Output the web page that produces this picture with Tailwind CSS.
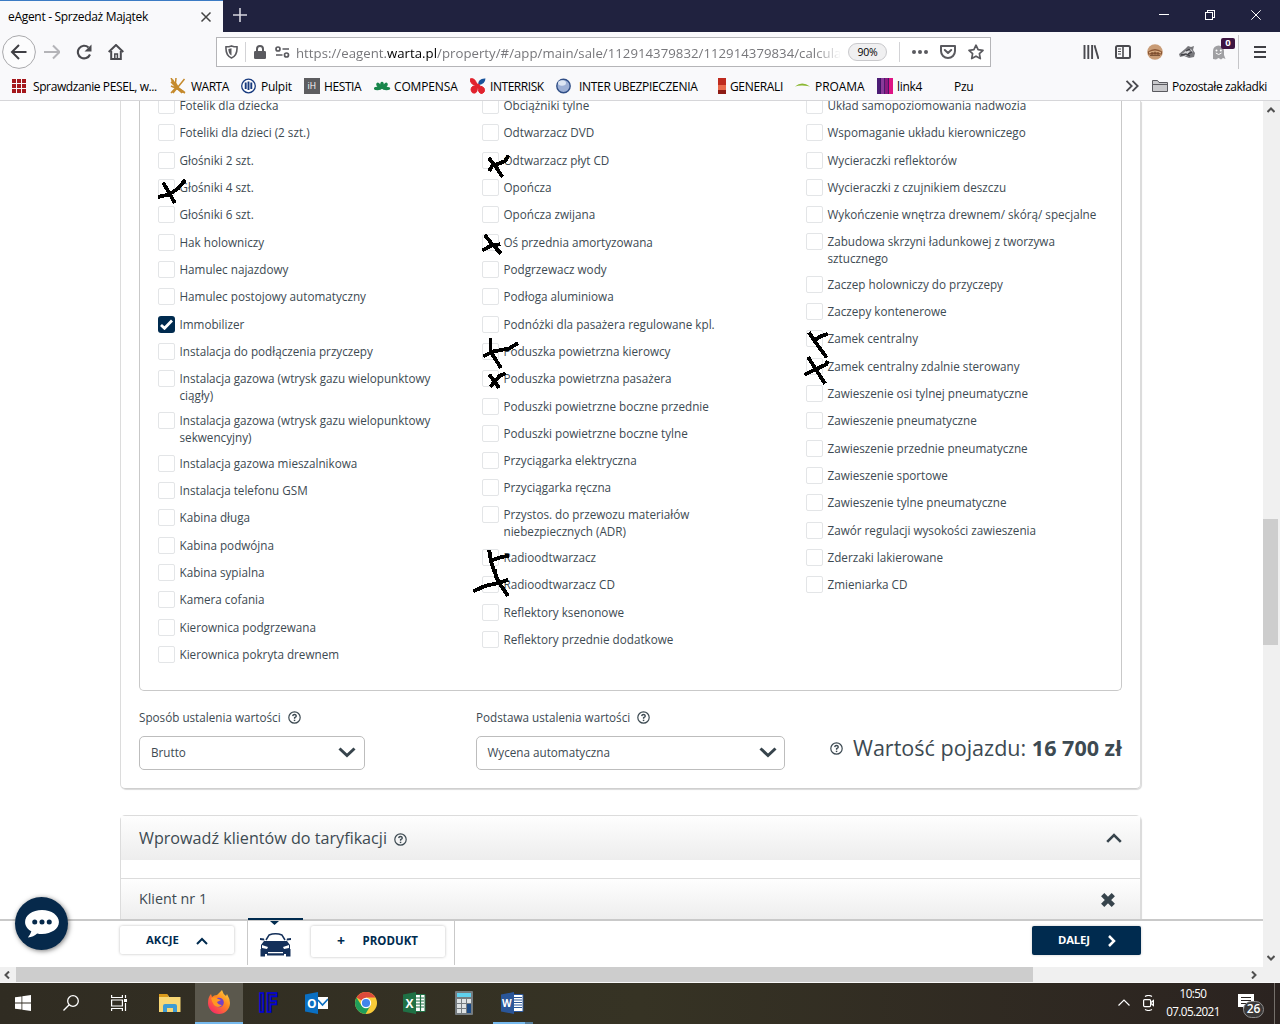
<!DOCTYPE html>
<html lang="pl">
<head>
<meta charset="utf-8">
<title>eAgent - Sprzedaż Majątek</title>
<script src="https://cdn.jsdelivr.net/npm/@tailwindcss/browser@4"></script>
</head>
<body class="bg-white">
<div class="relative flex h-[1024px] w-[1280px] flex-col overflow-hidden font-['Open_Sans',sans-serif] text-[#3d4a52]">

  <!-- Tab strip -->
  <div class="flex h-8 shrink-0 bg-[#20223f] text-black">
    <div class="flex w-[223px] items-center border-t border-[#3b7bc4] bg-[#f9f9fb] pl-2">
      <span class="w-[192px] text-[12px] tracking-[-0.310px] whitespace-nowrap">eAgent - Sprzedaż Majątek</span>
      <svg class="size-3" viewBox="0 0 12 12" fill="none" stroke="#444" stroke-width="1.5"><path d="M1.5 1.5l9 9M10.500 1.500l-9 9"/></svg>
    </div>
    <svg class="mt-2 ml-2.5 size-4" viewBox="0 0 16 16" stroke="#d5d5de" stroke-width="1.6"><path d="M0 7h14M7 0v14"/></svg>
    <div class="ml-auto flex items-center gap-[36px] pr-[19px] pb-0.5">
      <svg class="h-2.5 w-2.5" viewBox="0 0 10 10" stroke="#fff" shape-rendering="crispEdges"><path d="M0 4.500h10"/></svg>
      <svg class="h-2.5 w-2.5" viewBox="0 0 10 10" stroke="#fff" fill="none" shape-rendering="crispEdges"><path d="M.5 2.500h7v7h-7zM2.500 2.500v-2h7v7h-2"/></svg>
      <svg class="h-2.5 w-2.5" viewBox="0 0 10 10" stroke="#fff"><path d="M.3.3l9.400 9.400M9.700.3L.3 9.700"/></svg>
    </div>
  </div>

  <!-- Navigation toolbar -->
  <div class="flex h-10 shrink-0 items-center bg-[#f9f9fb] pl-0.5">
    <svg class="size-[34px]" viewBox="0 0 34 34" fill="none"><circle cx="17" cy="17" r="16.400" fill="#fcfcfd" stroke="#a9a9ac"/><path d="M24.500 17H10.500M17 10l-7 7 7 7" stroke="#3f3f44" stroke-width="2"/></svg>
    <svg class="ml-2 size-4" viewBox="0 0 16 16" fill="none" stroke="#b4b4b8" stroke-width="2"><path d="M0 8h15M9 1.500L15.500 8 9 14.500"/></svg>
    <svg class="ml-4 size-4" viewBox="0 0 16 16" fill="none"><path d="M14 10.500A6.300 6.300 0 1 1 12.500 3.500" stroke="#4a4a4f" stroke-width="2.100"/><path d="M15.500.5v7h-7z" fill="#4a4a4f"/></svg>
    <svg class="ml-4 size-4" viewBox="0 0 16 16" fill="none" stroke="#4a4a4f"><path d="M.7 8L8 1l7.300 7" stroke-width="2"/><path d="M3.200 7v8h9.600V7" stroke-width="2"/><path d="M6.800 15v-5h2.600v5" stroke-width="1.500"/></svg>

    <div class="ml-[92px] flex h-[30px] w-[775px] items-center border border-[#b5b5b8] bg-white pl-2">
      <svg class="h-[14px] w-[13px]" viewBox="0 0 13 14" fill="none"><path d="M1 1.800Q4 1.800 6.500.9 9 1.800 12 1.800 12.600 10.500 6.500 13 .4 10.500 1 1.800z" stroke="#5a5a5f" stroke-width="1.600"/><path d="M6.500 3.300v7.200Q3.300 8.500 3.400 3.900z" fill="#5a5a5f"/></svg>
      <div class="ml-[7px] h-5 w-px bg-[#d3d3d6]"></div>
      <svg class="ml-2 h-[14px] w-3" viewBox="0 0 12 14"><path d="M3 7V4a3 3 0 0 1 6 0v3" fill="none" stroke="#5a5a5f" stroke-width="2"/><rect y="6" width="12" height="8" rx="1.300" fill="#5a5a5f"/></svg>
      <svg class="ml-[9px] h-3 w-[15px]" viewBox="0 0 15 12" fill="none" stroke="#5a5a5f" stroke-width="1.700"><circle cx="3" cy="3" r="2"/><path d="M7.500 3H14M1 9h6.500"/><circle cx="11.500" cy="9" r="2"/></svg>
      <div class="mt-[3px] ml-[6px] w-[545px] text-[13.200px] tracking-[0.030px] whitespace-nowrap text-[#77777b] [mask-image:linear-gradient(to_right,black_95%,transparent)]">https://eagent.<span class="text-black">warta.pl</span>/property/#/app/main/sale/112914379832/112914379834/calcula</div>
      <div class="ml-[7px] flex h-[18px] w-[39px] items-center justify-center rounded-full border border-[#c9c9cc] bg-[#f0f0f1] pt-0.5 text-[10.500px] tracking-[-0.300px] text-black">90%</div>
      <div class="ml-3 h-5 w-px bg-[#d3d3d6]"></div>
      <svg class="ml-3 h-1 w-4" viewBox="0 0 16 4" fill="#5a5a5f"><circle cx="2" cy="2" r="2"/><circle cx="8" cy="2" r="2"/><circle cx="14" cy="2" r="2"/></svg>
      <svg class="ml-3 h-[14px] w-4" viewBox="0 0 16 14" fill="none" stroke="#5a5a5f" stroke-width="2" stroke-linecap="round" stroke-linejoin="round"><path d="M1 1h14v5a7 7 0 0 1-14 0z"/><path d="M4.800 5L8 8l3.200-3"/></svg>
      <svg class="ml-3 size-4" viewBox="0 0 16 16" fill="none" stroke="#5a5a5f" stroke-width="1.700" stroke-linejoin="round"><path d="M8 1.200l2.100 4.500 4.900.6-3.600 3.400.9 4.900L8 12.200l-4.300 2.400.9-4.900L1 6.300l4.900-.6z"/></svg>
    </div>

    <svg class="ml-[92px] h-[14px] w-4" viewBox="0 0 16 14" stroke="#4a4a4f" stroke-width="1.900"><path d="M1.500 0v14M5.300 0v14M9.100 0v14M11.500 .3L15.500 14"/></svg>
    <svg class="ml-4 h-[14px] w-4" viewBox="0 0 16 14" fill="none" stroke="#4a4a4f"><rect x="1" y="1" width="14" height="12" rx="1.500" stroke-width="2"/><path d="M8 1v12" stroke-width="1.600"/><path d="M3 4h3M3 6.500h3M3 9h3"/></svg>
    <svg class="ml-4 size-4" viewBox="0 0 16 16"><circle cx="8" cy="8" r="7.800" fill="#c99c76"/><path d="M1 7.500Q8 2.500 15 7.500v3H1z" fill="#8b5735"/><path d="M2 8Q8 5 14 8v1.500Q8 7 2 9.500z" fill="#d8aa80"/><path d="M3 11.500h10M5 8v3M8 7.500v3M11 8v3" stroke="#6c4227" stroke-width=".8"/></svg>
    <svg class="ml-4 h-[14px] w-4" viewBox="0 0 16 14"><path d="M0 9L6 4l3-3 3 1 3-1-1 4 2 3-1 4-5 1-5-2-4 1z" fill="#77777b"/><path d="M3 9l5-4 3 1-4 5zM10 3l3 2 1 3" fill="#d5d5d8"/><path d="M2 10l5-1 4 2M7 6l4-2M9 9l4-2" stroke="#3f3f44" stroke-width="1.300" fill="none"/></svg>
    <div class="relative ml-4 h-4 w-4">
      <svg class="size-4" viewBox="0 0 16 16"><path d="M2 15V7a5.500 5.500 0 0 1 11 0v4l1.500 4-2.500-1-2 1.500-2.500-1.500L5 15.500z" fill="#a0a0a3"/><circle cx="5.500" cy="6.500" r="1" fill="#fff"/><circle cx="9.800" cy="6.500" r="1" fill="#fff"/><path d="M4.800 9Q7.700 12 10.500 9" stroke="#fff" fill="none"/></svg>
      <div class="absolute -top-[6px] left-2.5 flex h-[11px] w-[14px] items-center justify-center rounded-[2px] bg-[#3d1542] text-[9.500px] font-bold text-white">0</div>
    </div>
    <div class="ml-[11px] h-[34px] w-px bg-[#c6c6c9]"></div>
    <svg class="ml-[15px] h-3 w-3" viewBox="0 0 12 12" stroke="#3f3f44" stroke-width="2"><path d="M0 1h12M0 6h12M0 11h12"/></svg>
  </div>

  <!-- Bookmarks -->
  <div class="flex h-[29px] shrink-0 items-center border-b border-[#d6d6d9] bg-[#f9f9fb] pl-3 text-[12px] whitespace-nowrap text-black [&>span]:mt-0.5">
    <svg class="h-[14px] w-[21px]" viewBox="0 0 21 14" fill="#a5181c"><path d="M0 0h4v4H0zM5 0h4v4H5zM10 0h4v4h-4zM0 5h4v4H0zM5 5h4v4H5zM10 5h4v4h-4zM0 10h4v4H0zM5 10h4v4H5zM10 10h4v4h-4z"/></svg>
    <span class="w-[137px] tracking-[-0.400px]">Sprawdzanie PESEL, w...</span>
    <svg class="h-4 w-[21px]" viewBox="0 0 21 16" fill="none" stroke="#c58a2c" stroke-width="1.500"><path d="M1 0l5 8 9 6.500M1 4l6 6 5 5M6 0l-.5 5 3 5M1 15l5-5.500M14.500 1L8 9M1 8l7 3 7 4M3 15l4-5" /><path d="M2 2l5 8 6 4" stroke-width="2.500"/></svg>
    <span class="w-[50px] tracking-[-0.500px]">WARTA</span>
    <svg class="h-4 w-[20px]" viewBox="0 0 20 16"><circle cx="7.500" cy="8" r="6.800" fill="#fff" stroke="#16397e" stroke-width="1.300"/><path d="M4.700 4.500V11M7.500 3.500V12M10.300 4.500V11" stroke="#16397e" stroke-width="1.900"/></svg>
    <span class="w-[43px] tracking-[-0.250px]">Pulpit</span>
    <svg class="h-4 w-[20px]" viewBox="0 0 20 16"><path d="M0 0h16v16H0z" fill="#5d5d60"/><text x="3.500" y="11" font-size="8.500" fill="#fff" font-family="Open Sans">iH</text></svg>
    <span class="w-[50px] tracking-[-0.400px]">HESTIA</span>
    <svg class="h-4 w-[20px]" viewBox="0 0 20 16" fill="#18864b"><ellipse cx="8" cy="7.500" rx="2" ry="3.800"/><ellipse cx="5" cy="8" rx="1.900" ry="3.800" transform="rotate(-35 5 8)"/><ellipse cx="11" cy="8" rx="1.900" ry="3.800" transform="rotate(35 11 8)"/><ellipse cx="3.500" cy="10.500" rx="3.700" ry="1.700"/><ellipse cx="12.500" cy="10.500" rx="3.700" ry="1.700"/></svg>
    <span class="w-[76px] tracking-[-0.150px]">COMPENSA</span>
    <svg class="h-4 w-[20px]" viewBox="0 0 20 16"><path d="M0 1q5-2 7 6Q1 8 0 1zM7 8Q1 7 1 12q1 4 4 3 3-1 2-7zM8 8q0 8 4 7.500 3-1 2.500-4Q14 8 8 8z" fill="#e1232e" stroke="#e1232e"/><path d="M8 7Q8 0 15.500.5 15 7 8 7z" fill="#18539b"/><circle cx="7.500" cy="8" r="2.500" fill="#e1232e"/></svg>
    <span class="w-[66px] tracking-[-0.450px]">INTERRISK</span>
    <svg class="h-4 w-[23px]" viewBox="0 0 23 16"><circle cx="7.500" cy="8" r="6.700" fill="#9db0d6" stroke="#304e86" stroke-width="1.400"/><ellipse cx="6" cy="5" rx="4" ry="2.800" fill="#dce5f3"/></svg>
    <span class="w-[138px] tracking-[-0.320px]">INTER UBEZPIECZENIA</span>
    <svg class="h-4 w-[13px]" viewBox="0 0 13 16"><path d="M1 0h8v16H1z" fill="#bf2a1e"/><path d="M1 7h8v5H1z" fill="#ea6a4b"/><path d="M1 12h8v4H1z" fill="#8e1b14"/></svg>
    <span class="w-[65px] tracking-[-0.350px]">GENERALI</span>
    <svg class="h-4 w-[20px]" viewBox="0 0 20 16"><path d="M0 8.500Q7 2.500 15 8.500q-6-1-8-1-4 0-7 1z" fill="#8bb833"/></svg>
    <span class="w-[62px] tracking-[-0.050px]">PROAMA</span>
    <svg class="h-4 w-5" viewBox="0 0 20 16"><path d="M0 0h4v16H0z" fill="#4c1d75"/><path d="M4 0h4v16H4z" fill="#8a3a9a"/><path d="M8 0h4v16H8z" fill="#8c1a80"/><path d="M12 0h4v16h-4z" fill="#de1384"/><path d="M3.500 0v16M7.500 0v16M11.500 0v16" stroke="#3a1260" stroke-width=".8"/></svg>
    <span class="w-[57px] tracking-[-0.300px]">link4</span>
    <span class="w-[171px] tracking-[-0.300px]">Pzu</span>
    <svg class="h-3 w-[27px]" viewBox="0 0 27 12" fill="none" stroke="#4a4a4f" stroke-width="1.800"><path d="M1.500.8L6.700 6 1.500 11.200M7.500.8L12.700 6 7.500 11.200"/></svg>
    <svg class="h-4 w-5" viewBox="0 0 20 16"><path d="M.5 13.500V2.500h5l1.500 2h8.500v9z" fill="#c9c9cc" stroke="#5a5a5f"/><path d="M1 6.500h14" stroke="#5a5a5f"/></svg>
    <span class="tracking-[-0.380px]">Pozostałe zakładki</span>
  </div>

  <!-- Viewport -->
  <div class="flex h-[866px] shrink-0">
    <div class="flex w-[1263px] flex-col bg-white">
      <main class="flex h-[818px] flex-col overflow-hidden pl-[120px]">
        <section class="h-[688px] w-[1021px] shrink-0 rounded-b-[5px] border border-t-0 border-[#dcdcdc] border-b-[#cfcfcf] px-[18px] shadow-[1px_1px_1px_#d9d9d9]">
          <div id="equipment" class="flex h-[590px] w-[983px] rounded-b-[5px] border border-t-0 border-[#c9c9c9] pl-[18px]"></div>
          <div class="flex pt-[17px] text-[11.700px] leading-[18px]">
            <div class="w-[337px] shrink-0">
              <div class="flex items-center gap-[7px]"><span class="whitespace-nowrap">Sposób ustalenia wartości</span><svg class="size-[13px]"><use href="#help"/></svg></div>
              <div class="mt-[10px] flex h-[34px] w-[226px] items-center justify-between rounded-[5px] border border-[#bdbdbd] pr-2 pb-0.5 pl-[11px]"><span>Brutto</span><svg class="h-[11px] w-[18px]" viewBox="0 0 18 11" fill="none" stroke="#37444c" stroke-width="3"><path d="M1.500 1.500L9 8.500l7.500-7"/></svg></div>
            </div>
            <div class="w-[309px] shrink-0">
              <div class="flex items-center gap-[7px]"><span class="whitespace-nowrap">Podstawa ustalenia wartości</span><svg class="size-[13px]"><use href="#help"/></svg></div>
              <div class="mt-[10px] flex h-[34px] items-center justify-between rounded-[5px] border border-[#bdbdbd] pr-[7px] pb-0.5 pl-[10.500px]"><span>Wycena automatyczna</span><svg class="h-[11px] w-[18px]" viewBox="0 0 18 11" fill="none" stroke="#37444c" stroke-width="3"><path d="M1.500 1.500L9 8.500l7.500-7"/></svg></div>
            </div>
            <div class="ml-[45px] flex w-[292px] shrink-0 items-center gap-2.5 pt-[18px] text-[21.550px] whitespace-nowrap"><svg class="size-[13px] shrink-0"><use href="#help"/></svg><span>Wartość pojazdu: <b>16 700 zł</b></span></div>
          </div>
        </section>

        <section class="mt-[26px] h-[140px] w-[1021px] shrink-0 rounded-t-[5px] border border-[#dcdcdc] shadow-[1px_1px_1px_#d9d9d9]">
          <div class="flex h-[44px] items-center bg-linear-to-b from-[#fefefe] to-[#ededed] px-[18px]">
            <span class="text-[16.150px]">Wprowadź klientów do taryfikacji</span>
            <svg class="mt-[3px] ml-[7px] size-[13px]"><use href="#help"/></svg>
            <svg class="ml-auto h-2.5 w-4" viewBox="0 0 16 10" fill="none" stroke="#37444c" stroke-width="2.600"><path d="M1.200 8.800L8 2l6.800 6.800"/></svg>
          </div>
          <div class="mt-[18px] flex h-[43px] items-center justify-between border-t border-[#dcdcdc] bg-linear-to-b from-[#fefefe] to-[#ededed] pr-[25px] pb-0.5 pl-[18px]">
            <span class="text-[14.300px]">Klient nr 1</span>
            <svg class="mt-px size-[14px]" viewBox="0 0 14 14" stroke="#37444c" stroke-width="4.600"><path d="M1.700 1.700l10.600 10.600M12.300 1.700L1.700 12.300"/></svg>
          </div>
        </section>
      </main>

      <!-- Action bar -->
      <div class="relative flex h-12 border-t-2 border-[#c9c9c9] bg-white pl-[120px] text-[11.300px] font-bold text-[#002b4f]">
        <div class="absolute -top-[24px] left-[15px] flex size-[53px] items-center justify-center rounded-full bg-[#06294b] shadow-[1px_1px_5px_#0008]">
          <svg class="h-[30px] w-9" viewBox="0 0 36 31"><path d="M18 1C8 1 .5 6.500.5 13.500c0 4 2.500 7.500 6.500 9.500-1 3-2.500 5-3.500 6.500 4-.5 7-2 9.500-4.300 1.600.4 3.300.6 5 .6 10 0 17.500-5.500 17.500-12.300S28 1 18 1z" fill="#fff"/><g fill="#06294b"><circle cx="10.500" cy="13.500" r="2.600"/><circle cx="18" cy="13.500" r="2.600"/><circle cx="25.500" cy="13.500" r="2.600"/></g></svg>
        </div>
        <div class="mt-[5px] flex h-[28px] w-[114px] items-center rounded-[2px] pl-[26px] tracking-[0.050px] shadow-[0_0_3px_#0004]"><span class="w-[50px]">AKCJE</span><svg class="mt-0.5 h-2 w-3" viewBox="0 0 12 8" fill="none" stroke="#002b4f" stroke-width="2"><path d="M1 7l5-5 5 5"/></svg></div>
        <div class="relative ml-[13px] flex h-[44px] w-[208px] border-x border-[#c9c9c9]">
          <div class="absolute -top-[3px] left-0 h-[2px] w-[55px] bg-[#002b4f]"></div>
          <svg class="absolute top-0 left-[22px] h-[4px] w-[9px]" viewBox="0 0 9 4"><path d="M0 0h9L4.500 4z" fill="#002b4f"/></svg>
          <svg class="mt-3 ml-[11px] h-6 w-[33px]" viewBox="0 0 33 24"><path d="M7 7L10 2Q16.500-.5 23 2l3 5" fill="none" stroke="#14305a" stroke-width="1.500"/><path d="M5 8h23l3 4v6H2v-6zM1 5l4 .5.500 2L1 7zM32 5l-4 .5-.5 2L32 7zM1.500 16h30v7.500H27V21H6v2.500H1.500z" fill="#14305a"/><path d="M3 12l6 2-1 2-5-1zM30 12l-6 2 1 2 5-1zM9 19h15v1.200H9z" fill="#fff"/><path d="M8 21h17v1.500H8z" fill="#14305a"/></svg>
          <div class="mt-[5px] ml-[19px] flex h-[31px] w-[134px] items-center rounded-[2px] pb-0.5 pl-[26px] shadow-[0_0_3px_#0004]"><span class="w-[25.500px] text-[14px]">+</span><span class="text-[11.500px]">PRODUKT</span></div>
        </div>
        <div class="mt-[5px] mr-[122px] ml-auto flex h-[29px] w-[109px] items-center rounded-[2px] bg-[#002b4f] pb-px pl-[26px] tracking-[-0.150px] text-white shadow-[0_0_3px_#0003]"><span class="w-[49.500px]">DALEJ</span><svg class="mt-0.5 h-3 w-2" viewBox="0 0 8 12" fill="none" stroke="#fff" stroke-width="2.500"><path d="M1 1l5 5-5 5"/></svg></div>
      </div>
    </div>
    <div class="flex w-[17px] flex-col items-center bg-[#f0f0f0]">
      <svg class="mt-[5px] -ml-0.5 h-2 w-2" viewBox="0 0 8 8" fill="none" stroke="#505050" stroke-width="2"><path d="M.5 6L4 2.500 7.500 6"/></svg>
      <div class="mt-[405px] h-[126px] w-[15px] self-start bg-[#cdcdcd]"></div>
      <svg class="mt-auto mb-[5px] -ml-0.5 h-2 w-2" viewBox="0 0 8 8" fill="none" stroke="#505050" stroke-width="2"><path d="M.5 2L4 5.500 7.500 2"/></svg>
    </div>
  </div>

  <!-- Horizontal scrollbar -->
  <div class="flex h-4 shrink-0 items-center border-b border-[#f8f8f8] bg-[#f0f0f0]">
    <svg class="ml-[3px] h-2 w-[13px]" viewBox="0 0 13 8" fill="none" stroke="#505050" stroke-width="2"><path d="M6 .5L2.500 4 6 7.500"/></svg>
    <div class="h-full w-[1017px] bg-[#cdcdcd]"></div>
    <svg class="mr-[22px] ml-auto h-2 w-2" viewBox="0 0 8 8" fill="none" stroke="#505050" stroke-width="2"><path d="M2 .5L5.500 4 2 7.500"/></svg>
  </div>

  <!-- Taskbar -->
  <div class="flex h-[41px] shrink-0 bg-linear-to-r from-[#302c22] via-[#363324] to-[#2b2320] text-white">
    <div class="flex w-[46px] items-center justify-center pb-0.5"><svg class="size-4" viewBox="0 0 16 16" fill="#fff"><path d="M0 2.300l6.500-.9v6.200H0zM7.300 1.300L16 0v7.600H7.300zM0 8.400h6.500v6.200L0 13.700zM7.300 8.400H16V16l-8.700-1.200z"/></svg></div>
    <div class="ml-px flex w-12 items-center justify-center pb-0.5"><svg class="size-4" viewBox="0 0 16 16" fill="none" stroke="#fff" stroke-width="1.300"><circle cx="10" cy="6" r="5.300"/><path d="M6.200 9.800L.5 15.500"/></svg></div>
    <div class="flex w-12 items-center justify-center pb-0.5"><svg class="size-4" viewBox="0 0 16 16" fill="none" stroke="#fff" stroke-width="1.200"><path d="M.6 0v2.500h10.800V0M.6 16v-2.500h10.800V16M.6 5h10.800v6H.6zM14.500 0v3M14.500 8v8"/><path d="M13 4h3v3h-3z" fill="#fff" stroke="none"/></svg></div>
    <div class="flex w-[54px] items-center justify-center"><svg class="h-[19px] w-[22px]" viewBox="0 0 22 19"><path d="M0 1h9l1 2h11.500v15H0z" fill="#f8d775"/><path d="M0 0h8.500l1 3H0z" fill="#d99a1c"/><path d="M4 18v-6q0-2 2-2h10q2 0 2 2v6h-4v-4H8v4z" fill="#3e9bd3"/></svg></div>
    <div class="-ml-0.5 flex w-12 flex-col items-center border-b-2 border-[#76b9ed] bg-[#5b584d] pt-[7px]"><svg class="h-6 w-6" viewBox="0 0 24 24"><defs><linearGradient id="fx" x1="1" y1="0" x2=".2" y2="1"><stop stop-color="#ffe14a"/><stop offset=".45" stop-color="#ff8a1e"/><stop offset="1" stop-color="#f6246b"/></linearGradient></defs><path d="M1 13Q1 7 4 4l1 3q2-2 5-2l5-5q1 4 4 6l1-2q3 5 3 9A11 11 0 0 1 1 13z" fill="url(#fx)"/><circle cx="12" cy="12.500" r="4.800" fill="#7542c6"/><path d="M4 8q5-2 7 1l3 1-4 2q1 3 5 3-4 4-8 0Q5 12 4 8z" fill="#ff9822"/></svg></div>
    <div class="flex w-[49px] items-center justify-center pb-1"><svg class="h-6 w-6" viewBox="0 0 24 24"><text x="2" y="21.500" font-family="Open Sans" font-weight="700" font-size="27" textLength="20" lengthAdjust="spacingAndGlyphs" fill="#23234a" stroke="#0000d8" stroke-width="1.700">IF</text></svg></div>
    <div class="flex w-[49px] items-center justify-center pb-0.5"><svg class="h-[22px] w-[23px]" viewBox="0 0 23 22"><path d="M12 5h11v12H12z" fill="#fff"/><path d="M13 8l4.500 5L23 7" fill="none" stroke="#0a6fc2" stroke-width="1.600"/><path d="M0 2.500L13 0v22L0 19.500z" fill="#0a6fc2"/><text x="2" y="15.500" font-family="Open Sans" font-weight="700" font-size="12" fill="#fff">O</text></svg></div>
    <div class="flex w-[49px] items-center justify-center pb-0.5"><svg class="size-[22px]" viewBox="0 0 22 22"><circle cx="11" cy="11" r="11" fill="#f9cb38"/><path d="M11 11L1.500 5.500A11 11 0 0 1 20.500 5.500H11z" fill="#dc4a3c"/><path d="M1.500 5.500A11 11 0 0 0 10.500 22l5-8.500-9 0z" fill="#1f9e5a"/><circle cx="11" cy="11" r="5.200" fill="#fff"/><circle cx="11" cy="11" r="4.100" fill="#4285ea"/></svg></div>
    <div class="flex w-[49px] items-center justify-center pb-0.5"><svg class="h-[22px] w-[23px]" viewBox="0 0 23 22"><path d="M12 2.500h10v17H12z" fill="#fff" stroke="#1f7145"/><path d="M13 6h8M13 9h8M13 12h8M13 15h8M17.500 3v16" stroke="#1f7145" stroke-width="1.200"/><path d="M0 2.500L13 0v22L0 19.500z" fill="#1f7145"/><text x="2.500" y="15.500" font-family="Open Sans" font-weight="700" font-size="12" fill="#fff">X</text></svg></div>
    <div class="flex w-[49px] items-center justify-center pb-0.5"><svg class="h-6 w-[18px]" viewBox="0 0 18 24"><rect width="18" height="24" rx="1" fill="#757c80"/><path d="M2 2h14v4H2z" fill="#5fd1ef"/><path d="M2 8h4v4H2zM7 8h4v4H7zM12 8h4v4h-4zM2 13h4v4H2zM7 13h4v4H7zM2 18h4v4H2zM7 18h4v4H7z" fill="#dde2e4"/><path d="M12 13h4v9h-4z" fill="#1b4a85"/></svg></div>
    <div class="flex w-[49px] flex-col items-center justify-between pt-[9px]"><svg class="h-[22px] w-[23px]" viewBox="0 0 23 22"><path d="M12 2.500h10v17H12z" fill="#fff" stroke="#2a5699"/><path d="M13 5.500h8M13 8h8M13 10.500h8M13 13h8M13 15.500h8" stroke="#2a5699"/><path d="M0 2.500L13 0v22L0 19.500z" fill="#2a5699"/><text x="1" y="15" font-family="Open Sans" font-weight="700" font-size="10" fill="#fff">W</text></svg><div class="mr-1 flex h-0.5 w-10 self-end bg-[#567f9c]"><div class="w-8 bg-[#76b9ed]"></div></div></div>
    <div class="ml-auto flex items-center pb-0.5">
      <svg class="h-[7px] w-3" viewBox="0 0 12 7" fill="none" stroke="#fff" stroke-width="1.200"><path d="M.5 6.500L6 1l5.500 5.500"/></svg>
      <svg class="ml-[13px] h-4 w-[11px]" viewBox="0 0 11 16" fill="none" stroke="#fff" stroke-width="1.200"><rect x=".6" y="4.600" width="7" height="7" rx="1"/><path d="M8 7.500l2.400-2v5L8 8.500M2 1.500Q5.500-.5 9 1.500M2 14.500q3.500 2 7 0"/></svg>
      <div class="ml-[10px] w-[58px] text-center text-[11.700px] leading-[17.500px] tracking-[-0.600px]">10:50<br>07.05.2021</div>
      <div class="relative mt-1.5 ml-[16px] h-[25px] w-[35px]">
        <svg class="mt-px h-4 w-4" viewBox="0 0 16 16"><path d="M0 0h16v13H8l-3 3v-3H0z" fill="#fff"/><path d="M3 3.500h10M3 6.500h10M3 9.500h6" stroke="#2b2523"/></svg>
        <div class="absolute top-[8px] left-[5px] flex h-[17px] w-[21px] items-center justify-center rounded-full border border-[#8d8d8d] bg-[#3a3838] pb-px text-[12px] font-semibold">26</div>
      </div>
    </div>
    <div class="mr-[5px] ml-px h-[41px] w-px bg-[#75706b]"></div>
  </div>

  <!-- Pen marks -->
  <svg class="pointer-events-none absolute top-0 left-0 h-[1024px] w-[1280px]" fill="none" stroke="#000" stroke-width="3.800" stroke-linecap="square" stroke-linejoin="round" shape-rendering="crispEdges">
    <path d="M164 184l4 7 6 10.500M160 196.500l9-2 9-6 6-7"/>
    <path d="M490 159.500l5 6 6.500 10M490 169.500l2-3.500 6-2 7-3 2.500-4"/>
    <path d="M486 236.500l5.500 7 8 8.500M484 249.500l7.500-4 7-1"/>
    <path d="M490.500 340v12l4.500 6.500 5 8M485 355.500l8-4 16-3 7.500-4.500"/>
    <path d="M490.500 376l3 4 4.500 6.500M491.500 385.500l4-5 4.500-5 4-1.500"/>
    <path d="M810 334l5 7.500 5 7 5.500 7.500M815 340l6-4 5-1.500"/>
    <path d="M809 358.500l6 9.500 9 14M806 374l9-4.500 11-5 1-2"/>
    <path d="M489.500 552l1.500 9.500 4 11.500 3.500 9 8.500 12.500M495 571l1.500 7M491 560.500l9-3 7-1.500M475 590.500l10-4.500 13.500-3 8-2.500"/>
  </svg>

  <svg class="hidden">
    <symbol id="help" viewBox="0 0 13 13"><circle cx="6.500" cy="6.500" r="5.700" fill="none" stroke="#3d4a52" stroke-width="1.200"/><path d="M4.700 5.100Q4.900 3.500 6.500 3.500T8.300 5Q8.300 6 6.600 6.700V7.800" fill="none" stroke="#3d4a52" stroke-width="1.400"/><path d="M5.800 8.700h1.500v1.400H5.800z" fill="#3d4a52"/></symbol>
  </svg>
</div>

<script>
const columns = [
  ['Fotelik dla dziecka','Foteliki dla dzieci (2 szt.)','Głośniki 2 szt.','Głośniki 4 szt.','Głośniki 6 szt.','Hak holowniczy','Hamulec najazdowy','Hamulec postojowy automatyczny','*Immobilizer','Instalacja do podłączenia przyczepy','Instalacja gazowa (wtrysk gazu wielopunktowy|ciągły)','Instalacja gazowa (wtrysk gazu wielopunktowy|sekwencyjny)','Instalacja gazowa mieszalnikowa','Instalacja telefonu GSM','Kabina długa','Kabina podwójna','Kabina sypialna','Kamera cofania','Kierownica podgrzewana','Kierownica pokryta drewnem'],
  ['Obciążniki tylne','Odtwarzacz DVD','Odtwarzacz płyt CD','Opończa','Opończa zwijana','Oś przednia amortyzowana','Podgrzewacz wody','Podłoga aluminiowa','Podnóżki dla pasażera regulowane kpl.','Poduszka powietrzna kierowcy','Poduszka powietrzna pasażera','Poduszki powietrzne boczne przednie','Poduszki powietrzne boczne tylne','Przyciągarka elektryczna','Przyciągarka ręczna','Przystos. do przewozu materiałów|niebezpiecznych (ADR)','Radioodtwarzacz','Radioodtwarzacz CD','Reflektory ksenonowe','Reflektory przednie dodatkowe'],
  ['Układ samopoziomowania nadwozia','Wspomaganie układu kierowniczego','Wycieraczki reflektorów','Wycieraczki z czujnikiem deszczu','Wykończenie wnętrza drewnem/ skórą/ specjalne','Zabudowa skrzyni ładunkowej z tworzywa|sztucznego','Zaczep holowniczy do przyczepy','Zaczepy kontenerowe','Zamek centralny','Zamek centralny zdalnie sterowany','Zawieszenie osi tylnej pneumatyczne','Zawieszenie pneumatyczne','Zawieszenie przednie pneumatyczne','Zawieszenie sportowe','Zawieszenie tylne pneumatyczne','Zawór regulacji wysokości zawieszenia','Zderzaki lakierowane','Zmieniarka CD']
];
const empty = '<span class="size-[17px] shrink-0 rounded-[2px] border border-[#e3e5e7] bg-white"></span>';
const ticked = '<span class="flex size-[17px] shrink-0 items-center justify-center rounded-[3px] bg-[#002b4f]"><svg class="h-[11px] w-[13px]" viewBox="0 0 13 11" fill="none" stroke="#fff" stroke-width="2.800"><path d="M1 6l3.500 3.300L12 1.500"/></svg></span>';
document.getElementById('equipment').innerHTML = columns.map(items =>
  '<div class="-mt-[9.300px] w-[324px] shrink-0 text-[11.700px] leading-[17px] whitespace-nowrap">' + items.map(item => {
    const on = item[0] === '*';
    const lines = item.replace('*', '').split('|');
    const row = lines.length > 1 ? 'flex h-[42.300px] gap-[4.500px] pt-[4.600px]' : 'flex h-[27.340px] gap-[4.500px] pt-[5.200px]';
    return '<label class="' + row + '">' + (on ? ticked : empty) + '<span>' + lines.join('<br>') + '</span></label>';
  }).join('') + '</div>').join('');
</script>
</body>
</html>
